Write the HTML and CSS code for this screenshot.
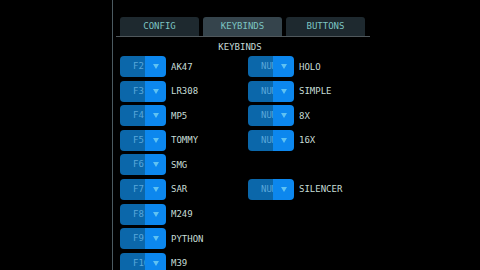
FILE: index.html
```html
<!DOCTYPE html>
<html>
  <head>
    <meta charset="utf-8">
    <meta name="viewport" content="width=device-width, initial-scale=1">
    <title>Keybinds</title>
    <link rel="stylesheet" href="styles.css">
  </head>
  <body>
    <div class="screen">
      <div class="rail"></div>
      <div class="panel">
        <nav class="tabs">
          <div class="tab">CONFIG</div>
          <div class="tab active">KEYBINDS</div>
          <div class="tab">BUTTONS</div>
        </nav>
        <div class="heading">KEYBINDS</div>
        <div class="binds">
          <!-- row 1 -->
          <div class="bind"><div class="key"><span class="key-name">F2</span><span class="key-drop"><i class="arrow"></i></span></div><span class="label">AK47</span></div>
          <div class="bind"><div class="key"><span class="key-name">NUM</span><span class="key-drop"><i class="arrow"></i></span></div><span class="label">HOLO</span></div>
          <!-- row 2 -->
          <div class="bind"><div class="key"><span class="key-name">F3</span><span class="key-drop"><i class="arrow"></i></span></div><span class="label">LR308</span></div>
          <div class="bind"><div class="key"><span class="key-name">NUM</span><span class="key-drop"><i class="arrow"></i></span></div><span class="label">SIMPLE</span></div>
          <!-- row 3 -->
          <div class="bind"><div class="key"><span class="key-name">F4</span><span class="key-drop"><i class="arrow"></i></span></div><span class="label">MP5</span></div>
          <div class="bind"><div class="key"><span class="key-name">NUM</span><span class="key-drop"><i class="arrow"></i></span></div><span class="label">8X</span></div>
          <!-- row 4 -->
          <div class="bind"><div class="key"><span class="key-name">F5</span><span class="key-drop"><i class="arrow"></i></span></div><span class="label">TOMMY</span></div>
          <div class="bind"><div class="key"><span class="key-name">NUM</span><span class="key-drop"><i class="arrow"></i></span></div><span class="label">16X</span></div>
          <!-- row 5 -->
          <div class="bind"><div class="key"><span class="key-name">F6</span><span class="key-drop"><i class="arrow"></i></span></div><span class="label">SMG</span></div>
          <div class="bind empty"></div>
          <!-- row 6 -->
          <div class="bind"><div class="key"><span class="key-name">F7</span><span class="key-drop"><i class="arrow"></i></span></div><span class="label">SAR</span></div>
          <div class="bind"><div class="key"><span class="key-name">NUM</span><span class="key-drop"><i class="arrow"></i></span></div><span class="label">SILENCER</span></div>
          <!-- rows 7-9 -->
          <div class="bind"><div class="key"><span class="key-name">F8</span><span class="key-drop"><i class="arrow"></i></span></div><span class="label">M249</span></div>
          <div class="bind empty"></div>
          <div class="bind"><div class="key"><span class="key-name">F9</span><span class="key-drop"><i class="arrow"></i></span></div><span class="label">PYTHON</span></div>
          <div class="bind empty"></div>
          <div class="bind"><div class="key"><span class="key-name">F10</span><span class="key-drop"><i class="arrow"></i></span></div><span class="label">M39</span></div>
          <div class="bind empty"></div>
        </div>
      </div>
    </div>
  </body>
</html>
```

FILE: styles.css
```css
body, html { margin: 0; padding: 0; background: #000; font-family: "DejaVu Sans Mono", monospace; font-size: 9px; overflow: hidden; }
.screen { display: flex; height: 270px; }
.rail { width: 112px; flex-shrink: 0; }
.panel { border-left: 1px solid #4b5a61; padding: 17px 0 0 3px; width: 254px; }
.tabs { display: flex; gap: 4px; padding: 0 4px; height: 19px; border-bottom: 1px solid #50585c; }
.tab { width: 79px; background: #1e292f; color: #7cc4c2; border-radius: 3px 3px 0 0; text-align: center; line-height: 19px; }
.tab.active { background: #35444c; }
.heading { color: #c4dad6; text-align: center; margin-top: 5px; line-height: 11px; padding-right: 6px; }
.binds { display: grid; grid-template-columns: 128px 128px; grid-auto-rows: 21px; row-gap: 3.6px; padding-left: 4px; margin-top: 3px; }
.bind { display: flex; align-items: center; gap: 5px; }
.key { display: flex; width: 46px; height: 21px; border-radius: 4px; overflow: hidden; flex-shrink: 0; }
.key-name { width: 25px; box-sizing: border-box; padding-left: 13px; background: #0b67aa; color: #5aa8da; line-height: 21px; white-space: nowrap; overflow: hidden; }
.key-drop { flex: 1; background: #0c87ee; display: flex; align-items: center; justify-content: center; }
.arrow { width: 0; height: 0; border-left: 3px solid transparent; border-right: 3px solid transparent; border-top: 5px solid #5fc2f2; }
.label { color: #c6dcd6; }
```
